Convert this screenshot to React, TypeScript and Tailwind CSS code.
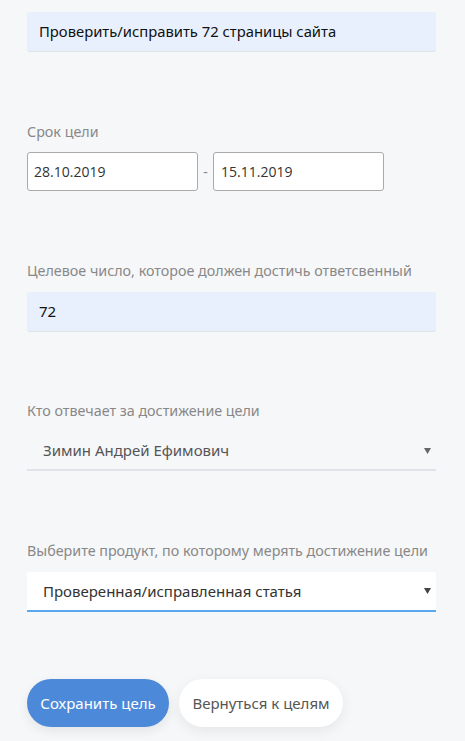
import React from "react";

function Caret({ color }: { color: string }) {
  return (
    <svg width="7" height="6" viewBox="0 0 7 6" className="shrink-0">
      <path d="M0 0 H7 L3.5 6 Z" fill={color} />
    </svg>
  );
}

export default function App() {
  const font = { fontFamily: '"Noto Sans", "Open Sans", sans-serif' };
  return (
    <div
      className="min-h-[741px] w-[465px] bg-[#f6f7f9] pl-[27px] pr-[29px] pt-[12px]"
      style={font}
    >
      <div className="flex h-[39px] items-center rounded-[3px] bg-[#e8f0fe] pl-[12px] text-[14.8px] text-[#111] shadow-[0_1px_0_#dfe2e8]">
        Проверить/исправить 72 страницы сайта
      </div>

      <div className="mt-[71px] text-[14.3px] leading-[20px] text-[#888]">Срок цели</div>
      <div className="mt-[10px] flex items-center">
        <div
          className="flex h-[39px] w-[171px] items-center rounded-[3px] border border-[#aaa] bg-white pl-[6px] text-[14px] text-[#333]"
          style={{ fontFamily: '"Open Sans", sans-serif' }}
        >
          28.10.2019
        </div>
        <span className="w-[15px] text-center text-[14px] text-[#888]">-</span>
        <div
          className="flex h-[39px] w-[171px] items-center rounded-[3px] border border-[#aaa] bg-white pl-[7px] text-[14px] text-[#333]"
          style={{ fontFamily: '"Open Sans", sans-serif' }}
        >
          15.11.2019
        </div>
      </div>

      <div className="mt-[70px] text-[14.3px] leading-[20px] text-[#888]">
        Целевое число, которое должен достичь ответсвенный
      </div>
      <div className="mt-[11px] flex h-[39px] items-center rounded-[3px] bg-[#e8f0fe] pl-[12px] text-[15px] text-[#111] shadow-[0_1px_0_#dfe2e8]">
        72
      </div>

      <div className="mt-[70px] text-[14.3px] leading-[20px] text-[#888]">
        Кто отвечает за достижение цели
      </div>
      <div className="mt-[11px] flex h-[39px] items-center justify-between border-b-2 border-[#e1e3e8] pl-[16px] pr-[5px] text-[15px] text-[#555]">
        <span>Зимин Андрей Ефимович</span>
        <Caret color="#666" />
      </div>

      <div className="mt-[70px] text-[14.3px] leading-[20px] text-[#888]">
        Выберите продукт, по которому мерять достижение цели
      </div>
      <div className="mt-[11px] flex h-[40px] items-center justify-between rounded-t-[3px] border-b-2 border-[#5aa8f2] bg-white pl-[16px] pr-[5px] text-[15px] text-[#333]">
        <span>Проверенная/исправленная статья</span>
        <Caret color="#444" />
      </div>

      <div className="mt-[67px] flex gap-[10px]">
        <button className="h-[48px] w-[142px] rounded-full bg-[#4d89d9] text-[15px] text-white shadow-[0_4px_12px_rgba(0,0,0,0.08)]">
          Сохранить цель
        </button>
        <button className="h-[48px] w-[164px] rounded-full bg-white text-[15px] text-[#555] shadow-[0_4px_14px_rgba(0,0,0,0.07)]">
          Вернуться к целям
        </button>
      </div>
    </div>
  );
}
